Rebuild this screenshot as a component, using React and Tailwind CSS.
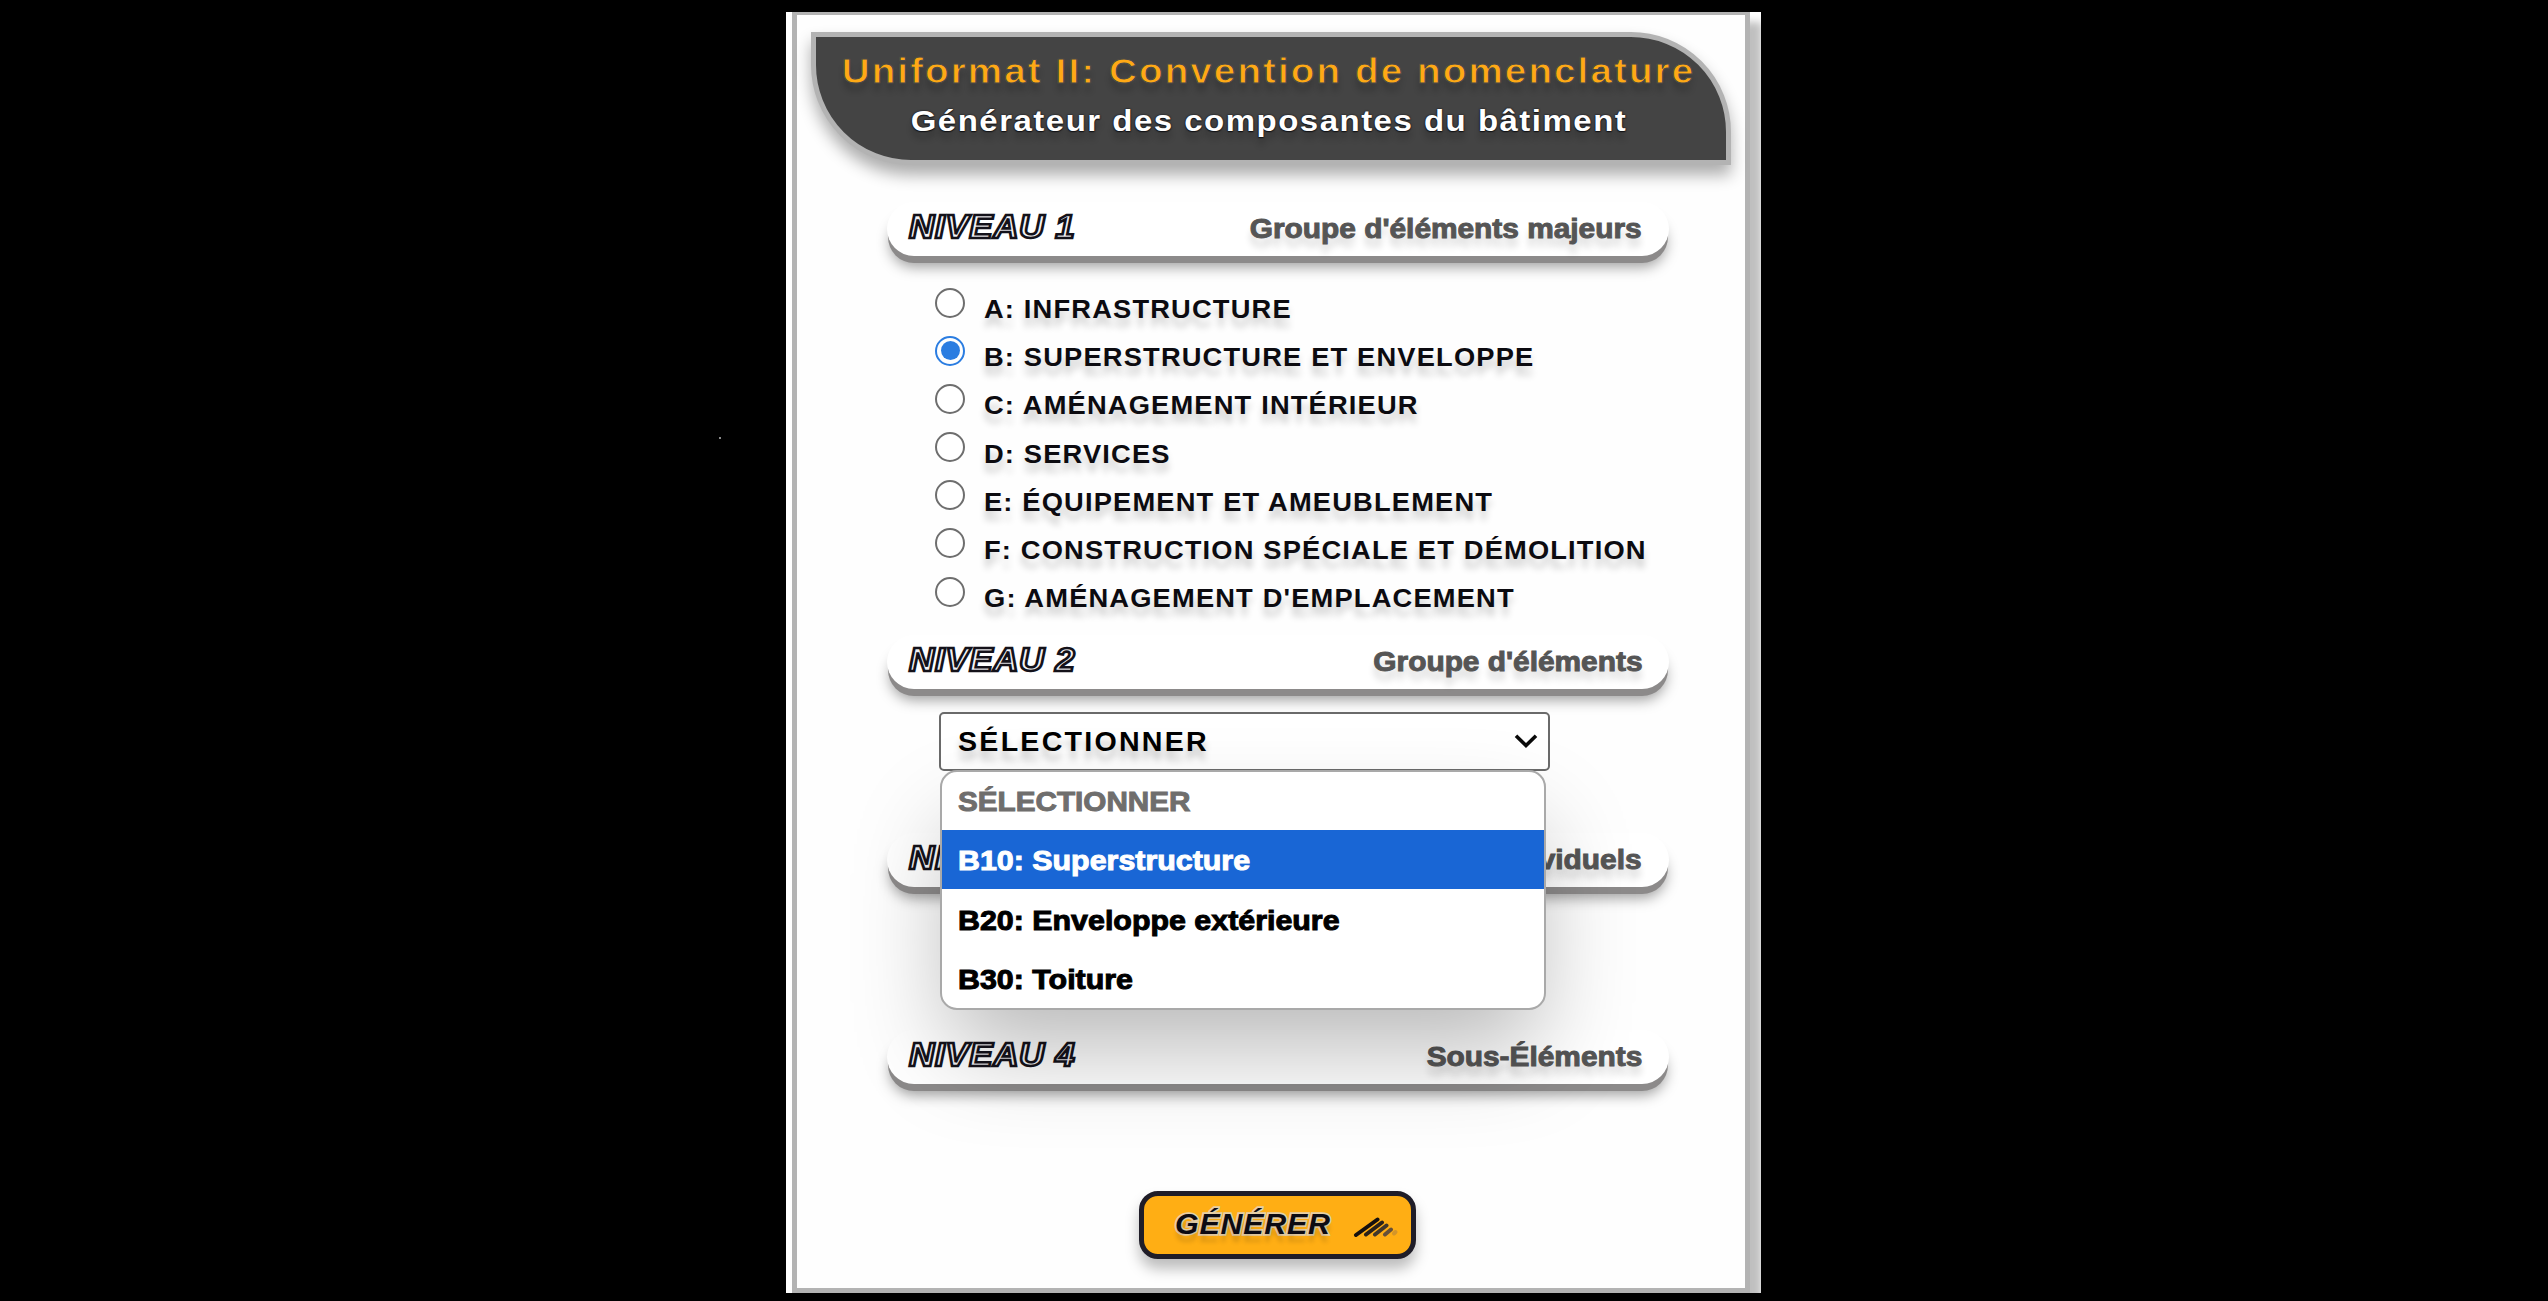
import React from "react";

const MAJOR_GROUPS = [
  { text: "A: INFRASTRUCTURE" },
  { text: "B: SUPERSTRUCTURE ET ENVELOPPE", checked: true },
  { text: "C: AMÉNAGEMENT INTÉRIEUR" },
  { text: "D: SERVICES" },
  { text: "E: ÉQUIPEMENT ET AMEUBLEMENT" },
  { text: "F: CONSTRUCTION SPÉCIALE ET DÉMOLITION" },
  { text: "G: AMÉNAGEMENT D'EMPLACEMENT" },
];

const OPTIONS = ["B10: Superstructure", "B20: Enveloppe extérieure", "B30: Toiture"];

function Header() {
  return (
    <header className="h-[133px] w-[920px] rounded-tr-[100px] rounded-bl-[100px] border-5 border-[#b3b3b3] bg-[#444] pt-3 text-center shadow-[0_10px_16px_rgba(0,0,0,0.32)]">
      <h1 className="-ml-[5px] scale-x-[1.12] text-[34.5px] leading-[44px] font-bold tracking-[1.85px] whitespace-nowrap text-[#ffa915] [-webkit-text-stroke:1px_#4c4a47] [text-shadow:0_8px_6px_rgba(0,0,0,0.2)]">
        Uniformat II: Convention de nomenclature
      </h1>
      <h2 className="mt-2 -ml-[4px] scale-x-[1.1] text-[30px] leading-[40px] font-bold tracking-[1.35px] whitespace-nowrap text-white [text-shadow:0_0_1px_#16181f,0_0_2px_#16181f,0_1px_1px_#111,0_8px_6px_rgba(0,0,0,0.2)]">
        Générateur des composantes du bâtiment
      </h2>
    </header>
  );
}

function LevelBar({ level, label, className }) {
  return (
    <div
      className={
        "flex h-[54px] w-[782px] items-start justify-between rounded-[28px] bg-white pr-[27px] pl-[22px] shadow-[0_8px_0_-1px_#8c8a8a,0_14px_14px_-3px_rgba(0,0,0,0.38)] " +
        className
      }
    >
      <span className="mt-[5px] origin-left scale-x-[1.06] text-[33px] leading-[40px] font-bold tracking-[0.6px] text-[#f4f4f6] italic [-webkit-text-stroke:2.6px_#14121a]">
        {level}
      </span>
      <span className="mt-[7px] origin-right scale-x-[1.066] text-[28px] leading-[40px] font-bold text-[#555] [-webkit-text-stroke:1px_#555] [text-shadow:0_9px_7px_rgba(0,0,0,0.16)]">
        {label}
      </span>
    </div>
  );
}

function RadioRow({ text, checked }) {
  return (
    <label className="flex h-[48.2px] items-start gap-[18px]">
      {checked ? (
        <span className="mt-[9.5px] flex size-[30px] items-center justify-center rounded-full border-[2.5px] border-[#2b7de1]">
          <span className="size-[19px] rounded-full bg-[#2b7de1]" />
        </span>
      ) : (
        <span className="mt-[9.5px] size-[30px] rounded-full border-2 border-[#6e6e6e] bg-white" />
      )}
      <span className="mt-[7px] ml-[1px] origin-left scale-x-[1.05] text-[26px] leading-[48px] font-bold tracking-[1.1px] whitespace-nowrap text-[#0c0b10] [text-shadow:0_9px_7px_rgba(0,0,0,0.2)]">
        {text}
      </span>
    </label>
  );
}

function LevelTwoSelect() {
  return (
    <div className="relative mt-[23px] ml-[52px] h-[59px] w-[611px]">
      <div className="flex h-full items-center justify-between rounded-[5px] border-2 border-[#6a6a6a] bg-white pr-[10px] pl-[17px]">
        <span className="mt-[2px] origin-left scale-x-[1.06] text-[27px] font-bold tracking-[2.1px] text-black [text-shadow:0_9px_7px_rgba(0,0,0,0.22)]">
          SÉLECTIONNER
        </span>
        <svg width="24" height="16" viewBox="0 0 24 16" fill="none" stroke="#0a0a0a" strokeWidth="3.6">
          <path d="M2 2.8 12 12.6 22 2.8" />
        </svg>
      </div>
      <ul className="absolute top-[58px] left-[1px] z-10 w-[606px] overflow-hidden rounded-[17px] border-2 border-[#a9a9a9] bg-white text-[28px] leading-[40px] font-bold shadow-[0_48px_96px_-10px_rgba(0,0,0,0.28)]">
        <li className="flex h-[57.6px] items-end pb-[8px] pl-[16px] text-[#6f6e6d] [-webkit-text-stroke:1px_#6f6e6d]">
          <span className="origin-left scale-x-[1.06]">SÉLECTIONNER</span>
        </li>
        {OPTIONS.map((o, i) => (
          <li
            key={o}
            className={
              i === 0
                ? "flex h-[59.6px] items-end bg-[#1966d5] pb-[8px] pl-[16px] text-white [-webkit-text-stroke:1px_#fff]"
                : "flex h-[59.6px] items-end pb-[8px] pl-[16px] text-black [-webkit-text-stroke:1px_#000]"
            }
          >
            <span className="origin-left scale-x-[1.085]">{o}</span>
          </li>
        ))}
      </ul>
    </div>
  );
}

function GenerateButton() {
  return (
    <button className="mt-[107px] ml-[252px] flex h-[68px] w-[277px] items-center justify-between rounded-[19px] border-5 border-[#1f1d28] bg-[#ffae14] pr-[12px] pl-[31px] shadow-[0_10px_14px_rgba(0,0,0,0.26)]">
      <span className="-mt-[2px] origin-left scale-x-[1.05] text-[29px] leading-[40px] font-bold tracking-[0.7px] text-[#0d0b12] italic [-webkit-text-stroke:3.4px_#e6cfa6] [paint-order:stroke_fill] [text-shadow:0_8px_4px_rgba(0,0,0,0.13)]">
        GÉNÉRER
      </span>
      <svg width="46" height="24" viewBox="0 0 46 24" fill="none" strokeWidth="4" strokeLinecap="round">
        <path d="M3 22 24.500 6.500" stroke="#16100f" />
        <path d="M13 21.500 29 9.500" stroke="#2a211a" />
        <path d="M22 21.500 33.500 12.500" stroke="#41372c" />
        <path d="M32 21.500 38 16.500" stroke="#675039" />
        <path d="M41 20.500 42.500 19" stroke="#d3952a" />
      </svg>
    </button>
  );
}

export default function App() {
  return (
    <div className="relative h-[1301px] w-[2548px] overflow-hidden bg-black pt-3 font-['Liberation_Sans',Arial,sans-serif]">
      <span className="absolute top-[437px] left-[719px] size-[2px] bg-[#8a8a8a]" />
      <div className="ml-[786px] h-[1281px] w-[975px] overflow-hidden bg-white pl-[6px]">
        <main className="h-[1281px] w-[958px] border-5 border-t-[3px] border-[#b3b3b3] bg-[#fefefe] pt-[17px] pl-[14px] shadow-[12px_10px_8px_rgba(0,0,0,0.25)]">
          <Header />
          <div className="pl-[76px]">
            <LevelBar level="NIVEAU 1" label="Groupe d'éléments majeurs" className="mt-[37px]" />
            <div className="mt-[22px] pl-12">
              {MAJOR_GROUPS.map((g) => (
                <RadioRow key={g.text} {...g} />
              ))}
            </div>
            <LevelBar level="NIVEAU 2" label="Groupe d'éléments" className="mt-[19.6px]" />
            <LevelTwoSelect />
            <LevelBar level="NIVEAU 3" label="Éléments individuels" className="mt-[62px]" />
            <LevelBar level="NIVEAU 4" label="Sous-Éléments" className="mt-[143.5px]" />
            <GenerateButton />
          </div>
        </main>
      </div>
    </div>
  );
}
